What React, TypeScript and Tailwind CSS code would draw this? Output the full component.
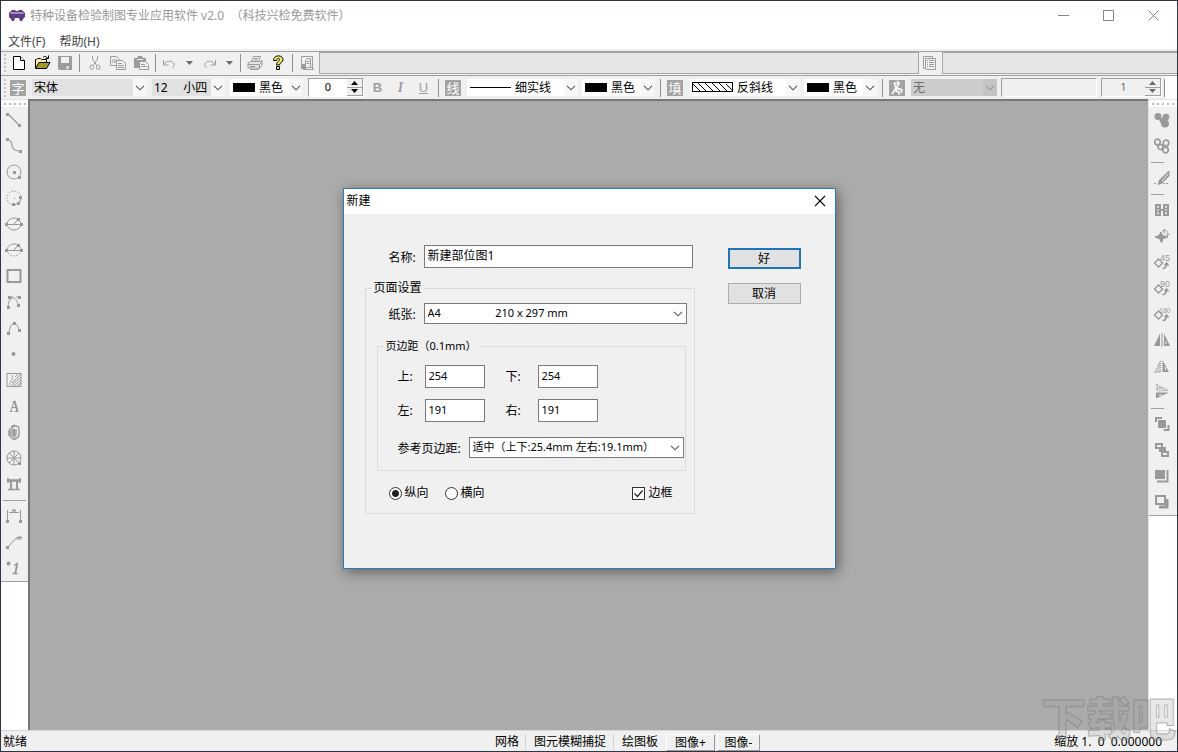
import React from "react";

type Kids = { children?: React.ReactNode };

function Px({ children, label }: Kids & { label?: string }) {
  return (
    <svg
      width="16"
      height="16"
      viewBox="0 0 16 16"
      fill="none"
      stroke="currentColor"
      className="block shrink-0 overflow-visible"
      aria-hidden={label ? undefined : true}
      aria-label={label}
    >
      {children}
    </svg>
  );
}

/* Small filled square used as a drawing handle */
function Dot({ x, y, s = 3 }: { x: number; y: number; s?: number }) {
  return <rect x={x} y={y} width={s} height={s} fill="currentColor" stroke="none" />;
}

function Chevron() {
  return (
    <svg width="10" height="6" viewBox="0 0 10 6" fill="none" stroke="currentColor" className="block">
      <path d="M1 .8l4 4 4-4" strokeWidth="1.1" />
    </svg>
  );
}

function Sep() {
  return <span className="h-[18px] w-px shrink-0 bg-[#8f8f8f]" />;
}

function Grip() {
  return (
    <svg width="4" height="20" viewBox="0 0 4 20" className="block shrink-0" aria-hidden>
      {[1, 5, 9, 13, 17].map((y) => (
        <rect key={y} x="1" y={y} width="2" height="2" fill="#c4c4c4" />
      ))}
    </svg>
  );
}

function TopGrip() {
  return (
    <div className="flex h-[7px] items-center justify-center gap-[3px] bg-white">
      {[0, 1, 2, 3, 4].map((i) => (
        <span key={i} className="h-[2px] w-[2px] bg-[#bdbdbd]" />
      ))}
    </div>
  );
}

function Tool({ label, children, className = "" }: Kids & { label: string; className?: string }) {
  return (
    <button type="button" aria-label={label} className={"flex h-[22px] shrink-0 items-center justify-center " + className}>
      {children}
    </button>
  );
}

function Badge({ label, children }: Kids & { label: string }) {
  return (
    <button
      type="button"
      aria-label={label}
      className="flex h-4 w-4 shrink-0 items-center justify-center bg-[#a3a3a3] text-[13px] leading-4 text-white"
    >
      {children}
    </button>
  );
}

function Combo({
  label,
  options,
  width,
  bg = "bg-white",
  pad = "pl-[2px]",
  chev = "bg-[#f7f7f7] text-[#555]",
  children,
}: Kids & { label: string; options: string[]; width: string; bg?: string; pad?: string; chev?: string }) {
  return (
    <div className={"relative flex h-[17px] shrink-0 items-center " + width + " " + bg}>
      {children}
      <select
        aria-label={label}
        className={"h-full min-w-0 flex-1 appearance-none bg-transparent text-[12px] leading-4 outline-none " + pad}
      >
        {options.map((o) => (
          <option key={o}>{o}</option>
        ))}
      </select>
      <span className={"pointer-events-none absolute inset-y-0 right-0 flex w-[14px] items-center justify-center " + chev}>
        <Chevron />
      </span>
    </div>
  );
}

function Spinner({ label, value, width, look }: { label: string; value: string; width: string; look: string }) {
  return (
    <div className={"flex h-[19px] shrink-0 border border-[#a0a0a0] border-r-white border-b-white " + width + " " + look}>
      <input
        aria-label={label}
        defaultValue={value}
        className="h-4 min-w-0 flex-1 bg-transparent text-center text-[11px] leading-4 outline-none"
      />
      <span className="flex w-4 flex-col bg-[#f0f0f0]">
        <button type="button" aria-label={label + " +"} className="flex flex-1 items-center justify-center border-r border-b border-[#a0a0a0]">
          <svg width="7" height="4" viewBox="0 0 7 4" fill="currentColor"><path d="M3.500 0L7 4H0z" /></svg>
        </button>
        <button type="button" aria-label={label + " -"} className="flex flex-1 items-center justify-center border-r border-b border-[#a0a0a0]">
          <svg width="7" height="4" viewBox="0 0 7 4" fill="currentColor"><path d="M0 0h7L3.500 4z" /></svg>
        </button>
      </span>
    </div>
  );
}

function Swatch() {
  return <span className="ml-[3px] h-[9px] w-[22px] shrink-0 bg-black" />;
}

function DropArrow() {
  return <svg width="7" height="4" viewBox="0 0 7 4" fill="#6b6b6b"><path d="M0 0h7L3.500 4z" /></svg>;
}

function ToolbarFile() {
  return (
    <div className="flex h-6 shrink-0 items-center border-t border-[#a0a0a0] bg-[#f0f0f0] pb-px pl-[2px] text-[#9c9c9c]">
      <Grip />
      <Tool label="新建" className="ml-[3px] w-[18px]">
        <svg width="14" height="16" viewBox="0 0 14 16" fill="#fff" stroke="#000" className="block">
          <path d="M1.500 1.500h7l4 4v9h-11z" /><path d="M8.500 1.500v4h4" />
        </svg>
      </Tool>
      <Tool label="打开" className="ml-1 w-5">
        <svg width="17" height="16" viewBox="0 0 17 16" fill="none" stroke="#000" className="block">
          <path d="M1.500 13V4.500h1l1-1h3l1 1h5V7" fill="#f5ee9a" />
          <path d="M1.500 13.500l3.500-6h11l-3.500 6z" fill="#a39a28" />
          <path d="M9 2.500c1.500-1.500 3.500-1.500 4.500.8M11.500 3.500h3v-3" />
        </svg>
      </Tool>
      <Tool label="保存" className="ml-[3px] w-5">
        <Px>
          <path d="M1 1h14v14H2.500L1 13.500z" fill="currentColor" stroke="none" />
          <path d="M4 2h8v6H4z" fill="#f0f0f0" stroke="none" />
          <path d="M9.500 11h2v3h-2z" fill="#f0f0f0" stroke="none" />
        </Px>
      </Tool>
      <span className="w-1" /><Sep />
      <Tool label="剪切" className="ml-1 w-[22px]">
        <Px>
          <path d="M5.500 1v3l4 6M10.500 1v3l-4 6" />
          <ellipse cx="4.800" cy="12.300" rx="1.800" ry="2.300" /><ellipse cx="11.200" cy="12.300" rx="1.800" ry="2.300" />
        </Px>
      </Tool>
      <Tool label="复制" className="w-6">
        <Px>
          <path d="M.5 1.500h6l3 3v6h-9zM2 5h5M2 7h5" />
          <path d="M6.500 5.500h6l3 3v6h-9z" fill="#f0f0f0" /><path d="M8 8.500h4M8 10.500h6M8 12.500h6" />
        </Px>
      </Tool>
      <Tool label="粘贴" className="w-[22px]">
        <Px>
          <path d="M1 3h3l1-2h4l1 2h3v10H1z" fill="currentColor" stroke="none" />
          <path d="M4 4.500h6" stroke="#f0f0f0" />
          <path d="M6.500 6.500h6l3 3v5h-9z" fill="#f0f0f0" /><path d="M8 9.500h4M8 11.500h6" />
        </Px>
      </Tool>
      <span className="w-[3px]" /><Sep />
      <Tool label="撤销" className="ml-1 w-[18px]">
        <Px><path d="M2.500 5v5h5M3 9.500c2-3.500 7-4.500 9.500-1.500 1.500 2 .5 4-1.500 5" /></Px>
      </Tool>
      <Tool label="撤销列表" className="w-[22px]"><DropArrow /></Tool>
      <Tool label="重做" className="w-5">
        <Px><path d="M13.500 5v5h-5M13 9.500c-2-3.500-7-4.500-9.500-1.500-1.500 2-.5 4 1.500 5" /></Px>
      </Tool>
      <Tool label="重做列表" className="w-[18px]"><DropArrow /></Tool>
      <span className="w-[2px]" /><Sep />
      <Tool label="打印" className="ml-[3px] w-[22px]">
        <Px>
          <path d="M4.500 6.500l2-5h7l-2 5M7 3.500h4M6.500 5h4" />
          <path d="M1 8l2.500-1.500h10L15 5v5.500L12.500 13H1z" fill="#e4e4e4" />
          <path d="M1 9.500h11.500L15 7M12.500 9.500V13M3 11.500h5M3.500 13v1.500h8L13 13" />
        </Px>
      </Tool>
      <Tool label="帮助" className="ml-px w-[22px]">
        <Px>
          <path d="M3.500 5.500c0-6 9.500-6 9.500-.8 0 2.800-3.500 2.800-3.500 5.300h-3C6.500 6 9.800 6.500 9.500 4.500 9.200 3 7 3 6.500 5.500z" fill="#f1e85b" stroke="#000" />
          <path d="M6.500 11.500h3v3h-3z" fill="#f1e85b" stroke="#000" />
        </Px>
      </Tool>
      <span className="w-[3px]" /><Sep />
      <Tool label="打印预览" className="ml-1 w-[22px]">
        <Px>
          <path d="M1.500 13V1.500h11V14M3 14.500h11" /><path d="M5.500 12V5.500l2-2h3v9h-5zM6.500 6.500h3M6.500 8.500h3" />
          <path d="M1 9h5v5H1z" fill="currentColor" stroke="none" /><path d="M10 11l4 4" />
        </Px>
      </Tool>
      <div className="h-[22px] flex-[600] border border-[#a8a8a8] bg-[#e6e6e6]" />
      <Tool label="报告" className="w-[23px]">
        <Px>
          <path d="M4 13.500H1.500v-12h9V3M3.500 13V3.500h10V14.500h-9z" />
          <path d="M5 5.500h1M7 5.500h5M5 7.500h1M7 7.500h5M5 9.500h1M7 9.500h5M5 11.500h1M7 11.500h5" />
        </Px>
      </Tool>
      <div className="h-[22px] flex-[235] border border-r-0 border-[#a8a8a8] bg-[#e6e6e6]" />
    </div>
  );
}

function ToolbarFormat() {
  return (
    <div className="flex h-6 shrink-0 items-center border-t border-[#a0a0a0] bg-[#f0f0f0] pl-[2px] text-black">
      <Grip />
      <span className="w-[3px]" />
      <Badge label="字体样式">字</Badge>
      <span className="w-[6px]" />
      <Combo label="字体" options={["宋体", "黑体"]} width="w-[115px]" bg="bg-[#e1e1e1]" />
      <span className="w-[5px]" />
      <Combo label="字号" options={["12\u00a0\u00a0\u00a0\u00a0\u00a0小四"]} width="w-[73px]" bg="bg-[#e1e1e1]" />
      <span className="w-[5px]" />
      <Combo label="文字颜色" options={["黑色"]} width="w-[73px]" pad="pl-1"><Swatch /></Combo>
      <span className="w-[5px]" />
      <Spinner label="角度" value="0" width="w-[56px]" look="bg-white" />
      <Tool label="粗体" className="ml-[2px] w-[23px]"><span className="font-['Liberation_Sans'] text-[13px] font-bold text-[#a0a0a0]">B</span></Tool>
      <Tool label="斜体" className="w-[23px]"><span className="font-['Liberation_Serif'] text-[14px] font-bold text-[#a0a0a0] italic">I</span></Tool>
      <Tool label="下划线" className="w-[23px]"><span className="font-['Liberation_Sans'] text-[13px] text-[#a0a0a0] underline">U</span></Tool>
      <span className="w-[3px]" /><Sep /><span className="w-[6px]" />
      <Badge label="线条样式">线</Badge>
      <span className="w-[6px]" />
      <Combo label="线型" options={["细实线"]} width="w-[111px]" pad="pl-1">
        <span className="ml-[3px] h-px w-[41px] shrink-0 bg-black" />
      </Combo>
      <span className="w-1" />
      <Combo label="线条颜色" options={["黑色"]} width="w-[73px]" pad="pl-1"><Swatch /></Combo>
      <span className="w-[5px]" /><Sep /><span className="w-[6px]" />
      <Badge label="填充样式">填</Badge>
      <span className="w-[7px]" />
      <Combo label="填充图案" options={["反斜线"]} width="w-[110px]" pad="pl-[3px]">
        <svg width="43" height="11" viewBox="0 0 43 11" fill="none" stroke="#000" className="ml-px block shrink-0">
          <rect x="1.500" y=".5" width="40" height="9" />
          <path d="M2 2l8 8M7 1l9 9M14 1l9 9M21 1l9 9M28 1l9 9M35 2l7 7" />
        </svg>
      </Combo>
      <span className="w-1" />
      <Combo label="填充颜色" options={["黑色"]} width="w-[73px]" pad="pl-1"><Swatch /></Combo>
      <span className="w-[5px]" /><Sep /><span className="w-[6px]" />
      <Badge label="编号样式">
        <svg width="16" height="16" viewBox="0 0 16 16" fill="none" stroke="#fff" strokeWidth="1.400">
          <path d="M8 1l2 2-1 2M5 3l5 1-3 4 5 1M5 3l2 5-4 6M8 8l-1 3 3 1v3M9 9l4 1-1 3" />
        </svg>
      </Badge>
      <span className="w-[6px]" />
      <Combo label="编号" options={["无"]} width="w-[86px]" bg="bg-[#cccccc] text-[#6d6d6d]" pad="pl-[2px]" chev="bg-[#c4c4c4] text-[#999]" />
      <span className="w-1" />
      <div className="h-[19px] w-[96px] shrink-0 border border-[#a0a0a0] border-r-white border-b-white" />
      <span className="w-1" />
      <Spinner label="序号" value="1" width="w-[61px]" look="text-[#6d6d6d]" />
      <span className="w-[2px]" /><Sep />
      <span className="h-full flex-1 bg-white" />
    </div>
  );
}

const SEP = null;

const leftTools: ([string, React.ReactNode] | null)[] = [
  ["直线", <><path d="M2 2l12 12" strokeWidth="1.200" /><Dot x={0} y={1} /><Dot x={12} y={12} /></>],
  ["曲线", <><path d="M1 2c6 0 4 5 6 8 1 2 3 3 7 3" strokeWidth="1.200" /><Dot x={0} y={0} /><Dot x={13} y={12} /></>],
  ["圆", <><circle cx="8" cy="8" r="7" /><Dot x={7} y={7} /><Dot x={12} y={12} /></>],
  ["圆弧", <><circle cx="8" cy="8" r="7" strokeDasharray="1.500 1.500" /><path d="M15 7c0 4-3 7-7 8" /><Dot x={13} y={6} /><Dot x={11} y={12} /><Dot x={6} y={13} /><Dot x={8} y={8} s={1} /></>],
  ["椭圆", <><ellipse cx="8" cy="8" rx="7" ry="6" /><path d="M1 8.500h14M8 8l4-5" /><Dot x={-1} y={7} /><Dot x={14} y={7} /><Dot x={11} y={2} /></>],
  ["椭圆弧", <><path d="M1 8c1-8 13-8 14 0" /><path d="M1 8c1 8 13 8 14 0" strokeDasharray="1.500 1.500" /><path d="M1 8.500h14M8 8l4-5" /><Dot x={-1} y={7} /><Dot x={14} y={7} /><Dot x={11} y={2} /></>],
  ["矩形", <rect x="1.500" y="2" width="13" height="12" strokeWidth="2" />],
  ["贝塞尔曲线", <><path d="M2 13C3 1 10 1 12 11M3 3h4M10 3h4" /><Dot x={2} y={2} /><Dot x={12} y={2} /><Dot x={1} y={12} /><Dot x={11} y={10} /></>],
  ["弧线", <><path d="M3 13C4 1 11 1 13 10" /><Dot x={7} y={2} /><Dot x={1} y={12} /><Dot x={12} y={9} /></>],
  ["点", <circle cx="7.500" cy="8" r="2" fill="currentColor" stroke="none" />],
  ["填充", <><rect x="1" y="1.500" width="14" height="13" /><path d="M9 5l3-3M6 11L15 2M5 14L15 5M8 14l7-6M11 14l4-3" /><path d="M5 3c2 1 2 4 0 6-1 2-1 3-2 4" /></>],
  ["文字", <path d="M3.500 13.500h3M8.500 13.500h4M5 13L8 3l3 10M6 9.500h4M8.500 3l2.500 10M8 3h1l3 10" />],
  ["附件", <><path d="M4 4v7c0 4 8 5 9 0V5c0-4-7-4-7 0v5c0 3 4 3 4 0V5M3 6v6M5 3l4-2M10 15h-4" strokeWidth="1.400" /><path d="M8 5v6" strokeWidth="2" /></>],
  ["坐标", <><circle cx="8" cy="8" r="7" /><path d="M8 1v14M1 8h14M3 3l10 10M13 3L3 13" /><Dot x={12} y={12} /></>],
  ["构件", <><path d="M1 4.500h14" strokeWidth="2.500" /><path d="M5 5v8M11 5v8" strokeWidth="2" /><path d="M2 2v5M14 2v5M2 13.500h12" strokeWidth="1.600" /></>],
  SEP,
  ["标注", <><path d="M1.500 2v12M14.500 2v12M3 4.500h10" /><path d="M6 2.500h4" strokeWidth="2" /><Dot x={0} y={12} /><Dot x={13} y={12} /></>],
  ["引线", <><path d="M2 13l7-8h6M10 3.500h5" /><path d="M12 3.500h4" strokeWidth="2" /><Dot x={0} y={12} /></>],
  ["编号", <><circle cx="2.500" cy="3.500" r="1.900" fill="currentColor" stroke="none" /><path d="M8 5.500l3-2-2 10M6.500 13.500h5M11.500 3.500l-2 10" strokeWidth="1.400" /></>],
];

function Rotate({ digits }: { digits: string }) {
  const three = digits.length > 2;
  return (
    <>
      <path d="M4.500 5l4 4-4 4-4-4z" strokeWidth="1.400" />
      <path d="M8.500 14.500c3.500 0 4-2 4-5M10.500 11.500l2-2.500 2 2.500" strokeWidth="1.500" />
      <text x={three ? 5 : 6} y="7" fill="currentColor" stroke="none" fontSize={three ? 7 : 9} fontFamily="Liberation Sans, sans-serif">
        {digits}
      </text>
    </>
  );
}

const rightTools: ([string, React.ReactNode] | null)[] = [
  ["组合", <><g fill="currentColor" stroke="none"><circle cx="4" cy="4.500" r="3.500" /><circle cx="12" cy="5" r="3.300" /><circle cx="11" cy="11.500" r="4" /><path d="M5 8l5-4 2 7-4 2z" /></g></>],
  ["取消组合", <g strokeWidth="1.700"><circle cx="3.500" cy="4" r="2.800" /><circle cx="12" cy="5" r="2.800" /><circle cx="6.500" cy="9" r="2.500" /><circle cx="11.500" cy="12" r="2.800" /></g>],
  SEP,
  ["格式刷", <><path d="M15 1v5L8 13l-4 1.500L5.500 10z" fill="currentColor" /><path d="M14 4l-6 7" stroke="#f0f0f0" /><path d="M0 13.500h3M9 13.500h6" strokeDasharray="2 1" /></>],
  SEP,
  ["对齐", <g strokeWidth="2"><path d="M2 3h4v3.500H2zM10 3h4v3.500h-4zM2 9.500h4V13H2zM10 9.500h4V13h-4z" /><path d="M2 3v10M14 3v10M6 3v10M10 3v10M6 8h4" /></g>],
  ["旋转", <><path d="M7 4l1.500 3.500L14 9l-5 1.500L7.500 15 6 11 1 9l4-1.500z" fill="currentColor" /><path d="M9 3c3-1 5 0 5 4M11 1L8.500 3 11 5M12 6l2 1.500L15.500 6" /></>],
  ["旋转45度", <Rotate digits="45" />],
  ["旋转90度", <Rotate digits="90" />],
  ["旋转180度", <Rotate digits="180" />],
  ["水平镜像", <><path d="M6 1.500V14H0zM10 1.500V14h6z" fill="currentColor" stroke="none" /><path d="M8 1v14" /><path d="M12 9v3" stroke="#f0f0f0" /></>],
  ["左右翻转", <><path d="M6.500 3v11H1z" strokeDasharray="1 1" strokeWidth="1.500" /><path d="M4 8v6M5.500 5v9" strokeDasharray="1 1" /><path d="M8.500 2v12H15z" fill="currentColor" stroke="none" /><path d="M11.500 9v3" stroke="#f0f0f0" /></>],
  ["上下翻转", <><path d="M3 1v5.500h11zM3 4h6" strokeDasharray="1 1" strokeWidth="1.500" /><path d="M2 8.500h13L2 14.500z" fill="currentColor" stroke="none" /><path d="M5 11h3" stroke="#f0f0f0" /></>],
  SEP,
  ["置前", <><path d="M4.500 4.500h7v7h-7z" fill="currentColor" /><path d="M2 6V2h6M9.500 14h5V9" strokeWidth="2" /></>],
  ["置后", <><path d="M2 2h6v4H2zM8 10h6v4H8z" strokeWidth="2" /><path d="M6 6h5v4H8V9H6z" fill="currentColor" strokeWidth="2" /></>],
  ["上移", <><path d="M1 2h10v9H1z" fill="currentColor" stroke="none" /><path d="M13.500 2v11.500H3" strokeWidth="2" /></>],
  ["下移", <><path d="M2 2h9v8H2z" strokeWidth="2" /><path d="M13 5v8H5" strokeWidth="3" /></>],
];

function Palette({ tools, label, short }: { tools: ([string, React.ReactNode] | null)[]; label: string; short?: boolean }) {
  return (
    <nav aria-label={label} className="flex flex-col border-b border-[#a0a0a0] bg-[#f0f0f0]">
      <TopGrip />
      {tools.map((t, i) =>
        t ? (
          <button key={t[0]} type="button" aria-label={t[0]} className="flex h-[26px] items-center justify-center pr-[2px] text-[#999]">
            <Px>{t[1]}</Px>
          </button>
        ) : (
          <span key={i} className="flex h-[6px] items-center px-[2px]">
            <span className={"h-px bg-[#a0a0a0] " + (short ? "w-[13px]" : "w-full")} />
          </span>
        )
      )}
    </nav>
  );
}

function Margin({ id, label, value, labelWidth }: { id: string; label: string; value: string; labelWidth: string }) {
  return (
    <div className="flex items-center">
      <label htmlFor={id} className={labelWidth}>{label}</label>
      <input
        id={id}
        defaultValue={value}
        className="h-[23px] w-[60px] border border-[#7a7a7a] bg-white px-[3px] pb-[3px] text-[11px] outline-none"
      />
    </div>
  );
}

function FormSelect({ id, options, width }: { id: string; options: string[]; width: string }) {
  return (
    <div className={"relative h-[21px] " + width}>
      <select id={id} className="h-full w-full appearance-none border border-[#7a7a7a] bg-white px-[3px] pb-[2px] text-[11px] leading-4 outline-none">
        {options.map((o) => (
          <option key={o}>{o}</option>
        ))}
      </select>
      <span className="pointer-events-none absolute inset-y-0 right-1 flex items-center text-[#555]"><Chevron /></span>
    </div>
  );
}

function Dialog() {
  return (
    <section
      role="dialog"
      aria-labelledby="dlg"
      className="h-[381px] w-[493px] shrink-0 border border-[#2b7ab5] bg-[#f0f0f0] shadow-[2px_3px_12px_rgba(0,0,0,0.45)]"
    >
      <header className="flex h-[25px] items-center justify-between bg-white pr-[9px] pb-px pl-[3px]">
        <h2 id="dlg" className="text-[12px] leading-4">新建</h2>
        <button type="button" aria-label="关闭">
          <svg width="12" height="12" viewBox="0 0 12 12" stroke="#111" className="block"><path d="M1 1l10 10M11 1L1 11" strokeWidth="1.200" /></svg>
        </button>
      </header>
      <form className="flex gap-[33px] pt-[31px] pl-[21px]" onSubmit={(e) => e.preventDefault()}>
        <div className="w-[330px]">
          <div className="flex items-center pl-6">
            <label htmlFor="name" className="w-[35px] pt-[2px]">名称:</label>
            <input id="name" defaultValue="新建部位图1" className="h-[23px] w-[269px] border border-[#7a7a7a] bg-white px-[3px] pb-1 outline-none" />
          </div>
          <fieldset className="mt-3 h-[234px] border border-[#dcdcdc] pl-[11px]">
            <legend className="-ml-[5px] px-[2px] leading-4">页面设置</legend>
            <div className="mt-[7px] flex items-center pl-3">
              <label htmlFor="paper" className="w-[35px] pt-[2px]">纸张:</label>
              <FormSelect
                id="paper"
                width="w-[263px]"
                options={["A4" + "\u00a0".repeat(19) + "210 x 297 mm"]}
              />
            </div>
            <fieldset className="mt-[14px] h-[133px] w-[309px] border border-[#dcdcdc] pl-5">
              <legend className="-ml-[14px] px-[2px] text-[11px] leading-4">页边距（0.1mm）</legend>
              <div className="mt-[11px] grid grid-cols-[87px_92px] gap-x-[21px] gap-y-[11px]">
                <Margin id="mt" label="上:" value="254" labelWidth="w-[27px]" />
                <Margin id="mb" label="下:" value="254" labelWidth="w-8" />
                <Margin id="ml" label="左:" value="191" labelWidth="w-[27px]" />
                <Margin id="mr" label="右:" value="191" labelWidth="w-8" />
              </div>
              <div className="mt-[15px] flex items-center">
                <label htmlFor="ref" className="w-[71px] pt-[2px]">参考页边距:</label>
                <FormSelect id="ref" width="w-[215px]" options={["适中（上下:25.4mm 左右:19.1mm）"]} />
              </div>
            </fieldset>
            <div className="mt-[14px] flex items-center gap-4 pr-[21px] pl-3">
              <label className="flex items-center gap-[3px]">
                <input
                  type="radio"
                  name="dir"
                  defaultChecked
                  className="h-[13px] w-[13px] appearance-none rounded-full border border-[#333] bg-white checked:bg-[radial-gradient(circle,#222_0_3px,#fff_4px)]"
                />
                纵向
              </label>
              <label className="flex items-center gap-[3px]">
                <input
                  type="radio"
                  name="dir"
                  className="h-[13px] w-[13px] appearance-none rounded-full border border-[#333] bg-white checked:bg-[radial-gradient(circle,#222_0_3px,#fff_4px)]"
                />
                横向
              </label>
              <label className="ml-auto flex items-center gap-[3px]">
                <span className="grid h-[13px] w-[13px]">
                  <input type="checkbox" defaultChecked className="peer col-start-1 row-start-1 h-[13px] w-[13px] appearance-none border border-[#333] bg-white" />
                  <svg width="13" height="13" viewBox="0 0 13 13" fill="none" stroke="#222" className="pointer-events-none col-start-1 row-start-1 opacity-0 peer-checked:opacity-100">
                    <path d="M2.500 6.500l3 3 5-6" strokeWidth="1.200" />
                  </svg>
                </span>
                边框
              </label>
            </div>
          </fieldset>
        </div>
        <div className="flex flex-col gap-[14px] pt-[3px]">
          <button type="submit" className="h-[21px] w-[73px] border-2 border-[#1f76b5] bg-[#e1e1e1]">好</button>
          <button type="button" className="h-[21px] w-[73px] border border-[#adadad] bg-[#e1e1e1]">取消</button>
        </div>
      </form>
    </section>
  );
}

export default function App() {
  return (
    <div className="relative flex h-screen flex-col overflow-hidden border border-[#2c3644] bg-white font-['Noto_Sans','Noto_Sans_CJK_SC',sans-serif] text-[12px] leading-4 text-black">
      <header className="flex h-[29px] shrink-0 items-center pr-[18px] pl-2 text-[#999]">
        <svg width="16" height="11" viewBox="0 0 16 11" className="block">
          <path d="M3 0h3l1 1h2l1-1h3l3 3v4l-2 2-1 2h-2L10 8H6l-1 3H3L2 9 0 7V3z" fill="#5d3d82" />
          <path d="M2 2h12l1 2H1z" fill="#a98bc8" />
        </svg>
        <h1 className="ml-[5px] whitespace-pre">特种设备检验制图专业应用软件 v2.0  （科技兴检免费软件）</h1>
        <div className="ml-auto flex items-center gap-[34px]">
          <button type="button" aria-label="最小化"><svg width="11" height="11" viewBox="0 0 11 11" stroke="#888" className="block"><path d="M0 5.500h11" /></svg></button>
          <button type="button" aria-label="最大化"><svg width="11" height="11" viewBox="0 0 11 11" fill="none" stroke="#888" className="block"><rect x=".5" y=".5" width="10" height="10" /></svg></button>
          <button type="button" aria-label="关闭"><svg width="11" height="11" viewBox="0 0 11 11" stroke="#888" className="block"><path d="M.5.5l10 10M10.500.5l-10 10" /></svg></button>
        </div>
      </header>
      <div className="flex h-[21px] shrink-0 items-center gap-[14px] border-b-2 border-[#f0f0f0] pt-1 pl-[7px] text-[#444]">
        <button type="button">文件(F)</button>
        <button type="button">帮助(H)</button>
      </div>
      <ToolbarFile />
      <ToolbarFormat />
      <main className="flex min-h-0 flex-1">
        <aside className="w-[27px] shrink-0 border-t border-[#e4e4e4]">
          <Palette tools={leftTools} label="绘图工具" />
        </aside>
        <div className="flex min-w-0 flex-1 justify-center border-t-2 border-l-2 border-[#787878] bg-[#ababab] pt-[87px]">
          <Dialog />
        </div>
        <aside className="w-[29px] shrink-0 border-t border-l border-[#e4e4e4]">
          <Palette tools={rightTools} label="编辑工具" short />
        </aside>
      </main>
      <footer className="flex h-[21px] shrink-0 items-center border-t border-[#d8d8d8] bg-[#f0f0f0] pt-[2px] pr-[15px] pl-[2px]">
        <span className="w-[484px] shrink-0">就绪</span>
        <span className="w-[39px] shrink-0 border-r border-[#d4d4d4] pl-2">网格</span>
        <span className="w-[88px] shrink-0 border-r border-[#d4d4d4] pl-2">图元模糊捕捉</span>
        <span className="w-[52px] shrink-0 pl-2">绘图板</span>
        <button type="button" className="h-[17px] w-[49px] border border-white border-r-[#999] border-b-[#999]">图像+</button>
        <button type="button" className="ml-[2px] h-[17px] w-[43px] border border-white border-r-[#999] border-b-[#999]">图像-</button>
        <span className="ml-auto whitespace-pre">缩放 1.  0  0.000000</span>
      </footer>
      <div
        aria-hidden
        className="pointer-events-none absolute right-px bottom-[2px] text-[45px] leading-[60px] font-black text-[#a0a0a0]/25 [-webkit-text-stroke:1px_rgba(120,120,120,0.5)]"
      >
        下载吧
      </div>
    </div>
  );
}
